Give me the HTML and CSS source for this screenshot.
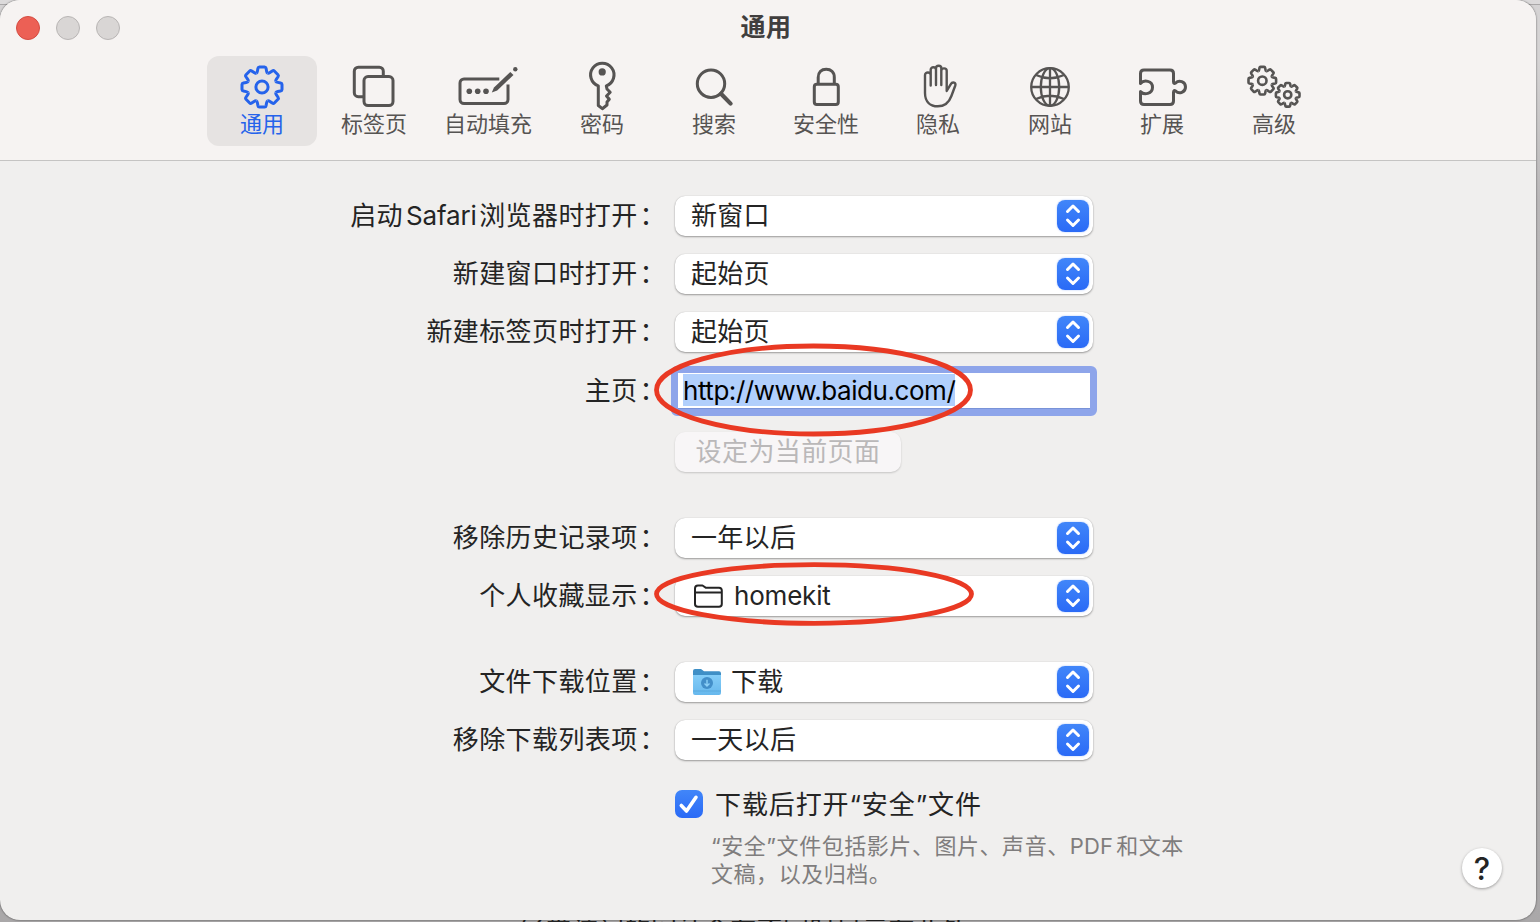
FILE: index.html
```html
<!DOCTYPE html>
<html lang="zh-CN">
<head>
<meta charset="utf-8">
<title>通用</title>
<link rel="stylesheet" href="styles.css">
</head>
<body>
<svg class="defs" width="0" height="0">
  <defs>
    <path id="tooth" d="M-5.7 -13.8Q-4.9 -14.2 -4.6 -15.8L-4.1 -18.6Q-3.8 -20 -2.6 -20H2.6Q3.8 -20 4.1 -18.6L4.6 -15.8Q4.9 -14.2 5.7 -13.8" vector-effect="non-scaling-stroke"/>
    <g id="gear">
      <use href="#tooth"/><use href="#tooth" transform="rotate(45)"/><use href="#tooth" transform="rotate(90)"/><use href="#tooth" transform="rotate(135)"/><use href="#tooth" transform="rotate(180)"/><use href="#tooth" transform="rotate(225)"/><use href="#tooth" transform="rotate(270)"/><use href="#tooth" transform="rotate(315)"/>
      <circle r="6.1" vector-effect="non-scaling-stroke"/>
    </g>
    <linearGradient id="folder" x1="0" y1="0" x2="0" y2="1"><stop offset="0" stop-color="#84cdf8"/><stop offset="1" stop-color="#67b8ed"/></linearGradient>
  </defs>
</svg>
<div class="behind">经常访问的网站会在不同时显示在此处</div>
<main class="window">
  <header class="toolbar">
    <div class="titlebar">
      <div class="lights"><i class="light close"></i><i class="light"></i><i class="light"></i></div>
      <h1 class="title">通用</h1>
    </div>
    <nav class="tabs">
      <div class="tab active"><svg class="icon" viewBox="0 0 60 50"><use href="#gear" transform="translate(30 27)"/></svg><span>通用</span></div>
      <div class="tab"><svg class="icon" viewBox="0 0 60 50"><path d="M20 36.7H14.3a4 4 0 0 1-4-4V11.2a4 4 0 0 1 4-4H35.300a4 4 0 0 1 4 4V16"/><rect x="20" y="16.600" width="29" height="29" rx="4"/></svg><span>标签页</span></div>
      <div class="tab wide"><svg class="icon" viewBox="0 0 60 50"><path d="M41.300 19H6a4 4 0 0 0-4 4V39.500a4 4 0 0 0 4 4H46a4 4 0 0 0 4-4V24.500"/><g class="solid"><circle cx="11.300" cy="31.300" r="2.800"/><circle cx="19.700" cy="31.300" r="2.800"/><circle cx="28" cy="31.300" r="2.800"/><circle cx="57.300" cy="9.300" r="2.200"/><path d="M33.800 32.500L36 27.500L52.300 12L55.500 15L39.200 30.400Z"/></g></svg><span>自动填充</span></div>
      <div class="tab"><svg class="icon" viewBox="0 0 60 50"><path d="M26.300 25.900A11.700 11.700 0 1 1 34.300 25.900L35 29L38.200 32.200L34.500 36L37.300 39.200L35 42V45L30.300 48.700L26.300 45.500Z"/><circle class="solid" cx="30.200" cy="11.900" r="3.600"/></svg><span>密码</span></div>
      <div class="tab"><svg class="icon" viewBox="0 0 60 50"><circle cx="27" cy="23.700" r="13.700"/><path class="thick" d="M37 33.700L46.600 43.600"/></svg><span>搜索</span></div>
      <div class="tab"><svg class="icon" viewBox="0 0 60 50"><rect x="18.300" y="24.300" width="24" height="20.200" rx="2.500"/><path d="M22.200 24V17.500C22.200 12 25.500 9.300 30.200 9.300S38.300 12 38.300 17.500V24"/></svg><span>安全性</span></div>
      <div class="tab"><svg class="icon hand" viewBox="0 0 60 50"><path d="M22.700 25.500V15C22.700 11.600 17 11.600 17 15V33C17 42 22.500 46.300 29.800 46.300C37 46.300 41.200 42 43.400 36L47.300 25.500C48.300 22.500 44.500 21.200 42.800 24.200L38.700 31V10.800C38.700 7.500 33.300 7.500 33.300 10.800M22.700 15V9.700C22.700 6.500 28 6.500 28 9.700V25M28 9.700V8C28 4.900 33.300 4.900 33.300 8V25"/></svg><span>隐私</span></div>
      <div class="tab"><svg class="icon globe" viewBox="0 0 60 50"><circle cx="30" cy="27" r="18.800"/><ellipse cx="30" cy="27" rx="9.200" ry="18.800"/><path d="M30 8V46M11 27H49M16 15Q30 21.500 44 15M16 39Q30 32.500 44 39"/></svg><span>网站</span></div>
      <div class="tab"><svg class="icon" viewBox="0 0 60 50"><path d="M8.500 23.500V13.500Q8.500 10 12 10H38Q41.500 10 41.500 13.500V21.500Q41.500 24.500 43.600 23C47 19.500 53.500 21.500 53.500 27S47 34.500 43.600 31Q41.500 29.500 41.500 32.500V41Q41.500 44.500 38 44.500H12Q8.500 44.500 8.500 41V31.500C12 35.500 20.500 34 20.500 27.300S12 19.500 8.500 23.500Z"/></svg><span>扩展</span></div>
      <div class="tab"><svg class="icon small-gears" viewBox="0 0 60 50"><use href="#gear" transform="translate(18.300 20.700) scale(.69)"/><use href="#gear" transform="translate(43.700 34.800) scale(.59)"/></svg><span>高级</span></div>
    </nav>
  </header>

  <section class="form">
    <div class="row"><label class="label">启动<span class="latin">Safari</span>浏览器时打开<span class="colon">：</span></label><div class="select"><span>新窗口</span><svg class="stepper" viewBox="0 0 32 32"><path d="M10.500 11.500L16 6L21.500 11.500M10.500 20L16 25.500L21.500 20"/></svg></div></div>
    <div class="row"><label class="label">新建窗口时打开<span class="colon">：</span></label><div class="select"><span>起始页</span><svg class="stepper" viewBox="0 0 32 32"><path d="M10.500 11.500L16 6L21.500 11.500M10.500 20L16 25.500L21.500 20"/></svg></div></div>
    <div class="row"><label class="label">新建标签页时打开<span class="colon">：</span></label><div class="select"><span>起始页</span><svg class="stepper" viewBox="0 0 32 32"><path d="M10.500 11.500L16 6L21.500 11.500M10.500 20L16 25.500L21.500 20"/></svg></div></div>
    <div class="row home"><label class="label">主页<span class="colon">：</span></label><div class="field"><span class="selected">http://www.baidu.com/</span></div></div>
    <div class="row"><span class="label"></span><div class="button">设定为当前页面</div></div>
    <div class="row section"><label class="label">移除历史记录项<span class="colon">：</span></label><div class="select"><span>一年以后</span><svg class="stepper" viewBox="0 0 32 32"><path d="M10.500 11.500L16 6L21.500 11.500M10.500 20L16 25.500L21.500 20"/></svg></div></div>
    <div class="row"><label class="label">个人收藏显示<span class="colon">：</span></label><div class="select"><svg class="folder" viewBox="0 0 32 28"><path d="M3 20V6.500Q3 3.500 6 3.500H10.500L14 5.800H27Q29.800 5.800 29.800 8.600V22Q29.800 24.800 27 24.800H6Q3 24.800 3 22ZM3 10.500H29.800"/></svg><span class="kit">homekit</span><svg class="stepper" viewBox="0 0 32 32"><path d="M10.500 11.500L16 6L21.500 11.500M10.500 20L16 25.500L21.500 20"/></svg></div></div>
    <div class="row section"><label class="label">文件下载位置<span class="colon">：</span></label><div class="select"><svg class="downloads" viewBox="0 0 32 30"><path d="M2 26V4Q2 2 4 2H10L13 4.300H28Q30 4.300 30 6.300V26Z" fill="#3f8fc6"/><path d="M2 8H30V26Q30 28 28 28H4Q2 28 2 26Z" fill="url(#folder)"/><path d="M2 24H30" stroke="#57a5d9" stroke-width=".8"/><circle cx="16" cy="16" r="6" fill="#438fc9"/><path d="M16 12.800V18.800M13.500 16.500L16 19L18.500 16.500" fill="none" stroke="#8cd0f7" stroke-width="1.400"/></svg><span>下载</span><svg class="stepper" viewBox="0 0 32 32"><path d="M10.500 11.500L16 6L21.500 11.500M10.500 20L16 25.500L21.500 20"/></svg></div></div>
    <div class="row"><label class="label">移除下载列表项<span class="colon">：</span></label><div class="select"><span>一天以后</span><svg class="stepper" viewBox="0 0 32 32"><path d="M10.500 11.500L16 6L21.500 11.500M10.500 20L16 25.500L21.500 20"/></svg></div></div>
    <div class="safe">
      <div class="check"><svg class="checkbox" viewBox="0 0 28 28"><path d="M6.300 15.500L11.500 21L21 7.300"/></svg><span>下载后打开“安全”文件</span></div>
      <p class="hint">“安全”文件包括影片、图片、声音、<span class="pdf">PDF</span>和文本<br>文稿，以及归档。</p>
    </div>
  </section>
  <div class="help">?</div>
  <svg class="marks" viewBox="0 0 1536 920"><ellipse cx="813.500" cy="390" rx="157" ry="44"/><ellipse cx="814" cy="594" rx="157.500" ry="29.300"/></svg>
</main>
</body>
</html>
```
FILE: styles.css
```css
* { box-sizing: border-box; }
body {
  margin: 0;
  width: 1540px;
  height: 922px;
  overflow: hidden;
  position: relative;
  background: linear-gradient(#dcdadb 0 4px, #aaa8a9 4px 5px, #d5d3d4 5px 60px, #b9b7b8 200px, #aaa8a9);
  font-family: Inter, "Noto Sans CJK SC", sans-serif;
  color: #242424;
}
.defs { position: absolute; }
.behind {
  position: absolute;
  left: 519px;
  bottom: -24px;
  font-size: 26px;
  line-height: 32px;
  letter-spacing: .4px;
  white-space: nowrap;
}
.window {
  position: relative;
  width: 1536px;
  height: 920px;
  border-radius: 20px;
  background: #f0efee;
  overflow: hidden;
  box-shadow: 0 0 2px rgba(0, 0, 0, .65);
}
.toolbar {
  height: 161px;
  background: #f6f3f2;
  border-bottom: 1px solid #c5c4c3;
}
.titlebar {
  display: grid;
  grid-template-columns: 1fr auto 1fr;
  align-items: center;
  height: 56px;
  padding: 0 20px 0 16px;
}
.lights { display: flex; gap: 16px; }
.light {
  width: 24px;
  height: 24px;
  border-radius: 50%;
  background: #d9d6d5;
  border: 1px solid #b8b5b4;
}
.light.close { background: #ec6055; border-color: #d44c42; }
.title {
  margin: 0 0 2px;
  font-size: 25px;
  line-height: 34px;
  font-weight: 700;
  letter-spacing: .5px;
  color: #403e3e;
}
.tabs { display: flex; gap: 2px; padding-left: 207px; }
.tab {
  display: flex;
  flex-direction: column;
  align-items: center;
  width: 110px;
  height: 90px;
  padding-top: 4px;
  border-radius: 12px;
  color: #565453;
  font-size: 22px;
  line-height: 30px;
  white-space: nowrap;
}
.tab.wide { width: 114px; }
.tab.active { background: #e6e3e2; color: #2563eb; }
.tab span { margin-top: -1px; }
.icon {
  width: 60px;
  height: 50px;
  flex: none;
  fill: none;
  stroke: currentColor;
  stroke-width: 3;
  stroke-linejoin: round;
  stroke-linecap: butt;
  overflow: visible;
}
.icon .solid { fill: currentColor; stroke: none; }
.icon .thick { stroke-width: 4.2; stroke-linecap: round; }
.icon.hand { stroke-width: 2.4; stroke-linecap: round; }
.icon.globe { stroke-width: 2.3; }
.icon.small-gears { stroke-width: 2.6; }
.form { padding-top: 35px; }
.row { display: flex; gap: 11px; height: 40px; margin-bottom: 18px; }
.row.section { margin-top: 46px; }
.label {
  width: 664px;
  text-align: right;
  font-size: 26px;
  line-height: 40px;
  letter-spacing: .4px;
  white-space: nowrap;
}
.colon { padding-left: 2px; margin-right: -2px; }
.latin { margin: 0 2.500px 0 3px; letter-spacing: -.15px; }
.select {
  display: flex;
  align-items: center;
  width: 418px;
  height: 40px;
  padding: 0 4px 0 16px;
  border-radius: 10px;
  background: #fff;
  box-shadow: 0 1px 2px rgba(0, 0, 0, .35), 0 0 1px rgba(0, 0, 0, .2);
  font-size: 26px;
  line-height: 40px;
  letter-spacing: .3px;
}
.select .kit { letter-spacing: -.2px; margin-top: -1px; }
.stepper {
  width: 32px;
  height: 32px;
  margin-left: auto;
  border-radius: 8px;
  background: linear-gradient(#4186f9, #2a6af6);
  box-shadow: 0 0 2px rgba(42, 106, 246, .4);
  fill: none;
  stroke: #fff;
  stroke-width: 3;
  stroke-linecap: round;
  stroke-linejoin: round;
}
.row.home { height: 44px; margin-bottom: 18px; padding-top: 1px; }
.field {
  width: 426px;
  height: 50px;
  margin: -5px 0 0 -4px;
  padding: 1px 0 0 5px;
  border: 7px solid #8ea5ea;
  border-radius: 6px;
  background: #fff;
  color: #000;
  font-size: 26px;
  line-height: 34px;
  letter-spacing: -.45px;
  box-shadow: inset 0 -1px 0 #7993d8;
}
.selected { display: inline-block; background: #b1cffc; height: 32px; white-space: nowrap; }
.button {
  width: 226px;
  height: 40px;
  border-radius: 10px;
  background: #f8f6f7;
  box-shadow: 0 1px 2px rgba(0, 0, 0, .18);
  color: #bab8b9;
  font-size: 26px;
  letter-spacing: .4px;
  line-height: 39px;
  text-align: center;
}
.folder { width: 32px; height: 28px; margin: -1px 10px 0 1px; fill: none; stroke: #242424; stroke-width: 2; stroke-linejoin: round; }
.downloads { width: 32px; height: 30px; margin-right: 8px; }
.safe { padding: 12px 0 0 675px; }
.check { display: flex; align-items: center; gap: 12px; height: 28px; font-size: 26px; letter-spacing: .9px; line-height: 30px; }
.check span { margin-top: 2px; }
.checkbox {
  width: 28px;
  height: 28px;
  border-radius: 7px;
  background: linear-gradient(#4186f9, #2a6af6);
  fill: none;
  stroke: #fff;
  stroke-width: 3.6;
  stroke-linecap: round;
  stroke-linejoin: round;
}
.hint { margin: 14px 0 0 36px; font-size: 22px; line-height: 28px; letter-spacing: .55px; color: #7f7d7d; white-space: nowrap; }
.pdf { margin-right: 3px; letter-spacing: .2px; }
.help {
  position: absolute;
  right: 34px;
  bottom: 32px;
  width: 40px;
  height: 40px;
  border-radius: 50%;
  background: #fff;
  box-shadow: 0 1px 3px rgba(0, 0, 0, .35);
  font-size: 31px;
  font-weight: 500;
  line-height: 41px;
  text-align: center;
}
.marks { position: absolute; left: 0; top: 0; width: 1536px; height: 920px; fill: none; stroke: #e93923; stroke-width: 4.8; }
```
